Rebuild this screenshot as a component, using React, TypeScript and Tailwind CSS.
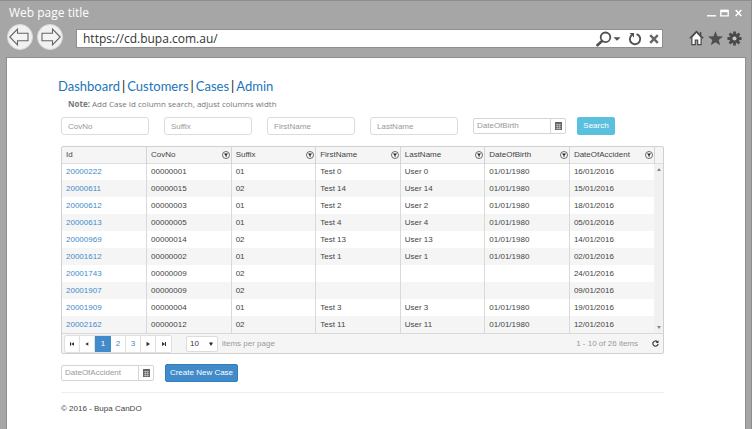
import React from "react";

const sans = "font-['Liberation_Sans',Arial,sans-serif]";
const humanist = "font-['Open_Sans','Noto_Sans',sans-serif]";

const columns = ["CovNo", "Suffix", "FirstName", "LastName", "DateOfBirth", "DateOfAccident"];

const rows: string[][] = [
  ["20000222", "00000001", "01", "Test 0", "User 0", "01/01/1980", "16/01/2016"],
  ["20000611", "00000015", "02", "Test 14", "User 14", "01/01/1980", "15/01/2016"],
  ["20000612", "00000003", "01", "Test 2", "User 2", "01/01/1980", "18/01/2016"],
  ["20000613", "00000005", "01", "Test 4", "User 4", "01/01/1980", "05/01/2016"],
  ["20000969", "00000014", "02", "Test 13", "User 13", "01/01/1980", "14/01/2016"],
  ["20001612", "00000002", "01", "Test 1", "User 1", "01/01/1980", "02/01/2016"],
  ["20001743", "00000009", "02", "", "", "", "24/01/2016"],
  ["20001907", "00000009", "02", "", "", "", "09/01/2016"],
  ["20001909", "00000004", "01", "Test 3", "User 3", "01/01/1980", "19/01/2016"],
  ["20002162", "00000012", "02", "Test 11", "User 11", "01/01/1980", "12/01/2016"],
];

function NavArrow({ back = false }: { back?: boolean }) {
  return (
    <button type="button" aria-label={back ? "Back" : "Forward"} className="size-[26px] shrink-0">
      <svg viewBox="0 0 26 26" className={back ? "size-full" : "size-full -scale-x-100"}>
        <circle cx="13" cy="13" r="12.5" fill="#f1f1f1" stroke="#d9d9d9" />
        <path d="M2.8 13 10.5 5.2V9.2H21V16.8H10.5V20.8Z" fill="#f4f4f4" stroke="#666" strokeWidth="1.1" />
      </svg>
    </button>
  );
}

function FilterIcon() {
  return (
    <svg viewBox="0 0 8 8" className="size-2 shrink-0">
      <circle cx="4" cy="4" r="3.5" fill="#fff" stroke="#444" strokeWidth="0.8" />
      <path d="M1.9 2.4H6.1L4.5 4.5V6.2L3.5 5.6V4.5Z" fill="#222" />
    </svg>
  );
}

function CalendarIcon() {
  return (
    <svg viewBox="0 0 7 8" className="h-2 w-[7px]">
      <path d="M0 0H7V8H0Z" fill="#666" />
      <path d="M1 2.5H6M1 4.5H6M1 6.5H6M2.4 2V7.5M4.6 2V7.5" stroke="#ddd" strokeWidth="0.5" />
    </svg>
  );
}

function TextField({ name }: { name: string }) {
  return (
    <input
      aria-label={name}
      placeholder={name}
      className="h-[18px] w-[88px] rounded-[3px] border border-[#dcdcdc] bg-white px-1.5 text-[8px] placeholder:text-[#999] outline-none"
    />
  );
}

function DateField({ name }: { name: string }) {
  return (
    <div className="flex h-4 w-[93px] overflow-hidden rounded-[2px] border border-[#d5d5d5] bg-white">
      <input aria-label={name} placeholder={name} className="w-0 grow px-[3px] text-[8px] placeholder:text-[#999] outline-none" />
      <button type="button" aria-label={`Pick ${name}`} className="flex w-[15px] items-center justify-center border-l border-[#d5d5d5]">
        <CalendarIcon />
      </button>
    </div>
  );
}

function PagerIcon({ path }: { path: string }) {
  return (
    <svg viewBox="0 0 6 6" className="size-1.5">
      <path d={path} fill="#333" />
    </svg>
  );
}

const pagerButton = "flex h-4 w-[15px] items-center justify-center border-r border-[#e0e0e0]";

function Browser() {
  return (
    <header className={humanist}>
      <div className="flex h-[23px] items-center justify-between pr-1 pl-[3px]">
        <h1 className="text-[12px] text-white">Web page title</h1>
        <div className="flex items-center gap-1">
          <button type="button" aria-label="Minimise">
            <svg viewBox="0 0 9 8" className="h-2 w-[9px]"><path d="M0 6.8H9" stroke="#fff" strokeWidth="1.4" /></svg>
          </button>
          <button type="button" aria-label="Maximise">
            <svg viewBox="0 0 9 8" className="h-2 w-[9px]"><path d="M.8 1.5H8.2V6.8H.8Z" fill="none" stroke="#fff" strokeWidth="1.3" /><path d="M.8 2H8.2" stroke="#fff" strokeWidth="2.4" /></svg>
          </button>
          <button type="button" aria-label="Close" className="ml-0.5">
            <svg viewBox="0 0 7 8" className="h-2 w-[7px]"><path d="M.7 1 6.3 7M6.3 1 .7 7" stroke="#fff" strokeWidth="1.6" /></svg>
          </button>
        </div>
      </div>
      <div className="flex h-[33px] items-start pr-1 pl-px">
        <div className="flex gap-1">
          <NavArrow back />
          <NavArrow />
        </div>
        <div className="mt-[5px] ml-[13px] flex h-[19px] grow items-center border border-[#8f8f8f] bg-white pr-[3px] pl-1.5">
          <input aria-label="Address" defaultValue="https://cd.bupa.com.au/" className="w-0 grow text-[12px] text-[#333] outline-none" />
          <button type="button" aria-label="Find" className="mr-[7px]">
            <svg viewBox="0 0 26 16" className="h-4 w-[26px]">
              <circle cx="10.5" cy="6.3" r="4.8" fill="none" stroke="#505050" strokeWidth="1.8" />
              <path d="M7 10 2.4 14.2" stroke="#505050" strokeWidth="2.6" strokeLinecap="round" />
              <path d="M18.5 6.2H25.5L22 9.8Z" fill="#505050" />
            </svg>
          </button>
          <button type="button" aria-label="Reload" className="mr-[7px]">
            <svg viewBox="0 0 14 14" className="size-3.5">
              <path d="M8.6 2.1A5.2 5.2 0 1 1 3.8 3" fill="none" stroke="#505050" strokeWidth="1.9" />
              <path d="M1.6 1H6V5.4Z" fill="#505050" />
            </svg>
          </button>
          <button type="button" aria-label="Stop">
            <svg viewBox="0 0 10 10" className="size-2.5"><path d="M1.2 1.2 8.8 8.8M8.8 1.2 1.2 8.8" stroke="#666" strokeWidth="2.4" /></svg>
          </button>
        </div>
        <div className="mt-1.5 ml-[26px] flex items-center gap-1">
          <button type="button" aria-label="Home">
            <svg viewBox="0 0 15 16" className="h-4 w-[15px]">
              <path d="M2.9 7V14.6H6.3V10.2H8.7V14.6H12.1V7L7.5 2.2Z" fill="#fff" stroke="#4a4a4a" strokeWidth="1.2" />
              <path d="M.8 8.3 7.5 1.5 14.2 8.3M11.6 5.5V2" fill="none" stroke="#4a4a4a" strokeWidth="1.4" />
            </svg>
          </button>
          <button type="button" aria-label="Favourites">
            <svg viewBox="0 0 15 15" className="size-[15px]"><path d="M7.5.2 9.5 5.2 15 5.5 10.7 8.9 12.2 14.2 7.5 11.2 2.8 14.2 4.3 8.9 0 5.5 5.5 5.2Z" fill="#4f4f4f" /></svg>
          </button>
          <button type="button" aria-label="Settings">
            <svg viewBox="0 0 16 16" className="size-[15px]">
              <path d="M8 .5V15.5M.5 8H15.5M2.7 2.7 13.3 13.3M13.3 2.7 2.7 13.3" stroke="#4a4a4a" strokeWidth="3" />
              <circle cx="8" cy="8" r="3.8" fill="#c6c6c6" stroke="#4a4a4a" strokeWidth="3.2" />
            </svg>
          </button>
        </div>
      </div>
    </header>
  );
}

function CaseGrid() {
  return (
    <section className="mt-[11px] overflow-hidden rounded-[2px] border border-[#d0d0d0] bg-[#f5f5f5]">
      <table className="w-full table-fixed border-collapse text-left text-[8px] leading-3 text-[#444]">
        <colgroup>
          <col />
          {columns.map((c) => <col key={c} />)}
          <col className="w-[9px]" />
        </colgroup>
        <thead>
          <tr className="h-4 border-b border-[#dedede]">
            <th className="px-1 font-normal">Id</th>
            {columns.map((c) => (
              <th key={c} className="border-l border-[#d4d4d4] pr-px pl-1 font-normal">
                <div className="flex items-center justify-between">
                  {c}
                  <button type="button" aria-label={`Filter ${c}`}><FilterIcon /></button>
                </div>
              </th>
            ))}
            <th className="border-l border-[#d4d4d4]" />
          </tr>
        </thead>
        <tbody>
          {rows.map((row, i) => (
            <tr key={row[0]} className="h-[17px] bg-white even:bg-[#f5f5f5]">
              <td className="px-1"><a href="#case" className="text-[#428bca]">{row[0]}</a></td>
              {row.slice(1).map((v, j) => (
                <td key={j} className="border-l border-[#d9d9d9] px-1">{v}</td>
              ))}
              {i === 0 && (
                <td rowSpan={10} className="h-px bg-[#f1f1f1]">
                  <div className="flex h-full flex-col items-center justify-between py-1">
                    <svg viewBox="0 0 4 3" className="h-[3px] w-1"><path d="M0 3 2 0 4 3Z" fill="#888" /></svg>
                    <svg viewBox="0 0 4 3" className="h-[3px] w-1"><path d="M0 0H4L2 3Z" fill="#888" /></svg>
                  </div>
                </td>
              )}
            </tr>
          ))}
        </tbody>
      </table>
      <footer className="flex h-5 items-center border-t border-[#d9d9d9] pr-1 pl-0.5 text-[8px] text-[#999]">
        <nav aria-label="Pages" className="flex overflow-hidden rounded-[2px] border border-[#e0e0e0] bg-white text-[#428bca]">
          <button type="button" aria-label="First page" className={pagerButton}><PagerIcon path="M1 1.2H2V4.8H1ZM2 3 5 1.2V4.8Z" /></button>
          <button type="button" aria-label="Previous page" className={pagerButton}><PagerIcon path="M1.3 3 4.3 1.2V4.8Z" /></button>
          <button type="button" aria-current="page" className="h-4 w-4 bg-[#428bca] text-white">1</button>
          <button type="button" className={pagerButton}>2</button>
          <button type="button" className={pagerButton}>3</button>
          <button type="button" aria-label="Next page" className={pagerButton}><PagerIcon path="M1.5 .8V5.2L5 3Z" /></button>
          <button type="button" aria-label="Last page" className="flex h-4 w-[15px] items-center justify-center"><PagerIcon path="M1 1V5L4 3ZM4 1H5V5H4Z" /></button>
        </nav>
        <label className="ml-3.5 flex items-center gap-1">
          <span className="grid h-4 w-8 items-center rounded-[2px] border border-[#dcdcdc] bg-white">
            <select defaultValue="10" className="col-start-1 row-start-1 h-3.5 w-full appearance-none bg-transparent pl-[3px] text-[8px] text-[#333] outline-none">
              <option>10</option>
              <option>20</option>
            </select>
            <svg viewBox="0 0 4 4" className="pointer-events-none col-start-1 row-start-1 mr-1 size-1 justify-self-end"><path d="M0 .5H4L2 4Z" fill="#222" /></svg>
          </span>
          items per page
        </label>
        <span className="ml-auto">1 - 10 of 26 items</span>
        <button type="button" aria-label="Refresh" className="ml-3.5">
          <svg viewBox="0 0 8 8" className="size-[7px]">
            <path d="M6.2 2A3 3 0 1 0 7 4.5" fill="none" stroke="#333" strokeWidth="1.3" />
            <path d="M4.3 3.4H7.4V.3Z" fill="#333" />
          </svg>
        </button>
      </footer>
    </section>
  );
}

export default function App() {
  const links = ["Dashboard", "Customers", "Cases", "Admin"];
  return (
    <div className={`flex min-h-screen flex-col border-t border-r border-[#8d8d8d] bg-[#a6a6a6] pr-[5px] pl-1.5 ${sans}`}>
      <Browser />
      <main className="grow border-x border-t border-[#8f8f8f] bg-white pr-[81px] pb-4 pl-[54px]">
        <nav className="-ml-[3px] mt-[18px] flex gap-0.5 font-[Lato,'Open_Sans',sans-serif] text-[13px] leading-5 text-[#222]">
          {links.map((l, i) => (
            <React.Fragment key={l}>
              {i > 0 && <span>|</span>}
              <a href={`#${l.toLowerCase()}`} className="text-[#1b75bc]">{l}</a>
            </React.Fragment>
          ))}
        </nav>
        <p className={`pl-[7px] text-[8px] leading-4 text-[#777] ${humanist}`}>
          <b>Note:</b> Add Case Id column search, adjust columns width
        </p>
        <form className="mt-[5px] flex items-center gap-[15px]">
          {["CovNo", "Suffix", "FirstName", "LastName"].map((n) => <TextField key={n} name={n} />)}
          <DateField name="DateOfBirth" />
          <button type="button" className="-ml-1 h-[18px] w-[38px] rounded-[2px] bg-[#5bc0de] text-[8px] text-white">Search</button>
        </form>
        <CaseGrid />
        <div className="mt-2.5 flex items-center gap-[11px]">
          <DateField name="DateOfAccident" />
          <button type="button" className="h-[18px] w-[73px] rounded-[2px] border border-[#357ebd] bg-[#428bca] text-[8px] text-white">Create New Case</button>
        </div>
        <hr className="mt-2.5 border-[#eee]" />
        <footer className="mt-2.5 text-[8px] leading-3 text-[#444]">© 2016 - Bupa CanDO</footer>
      </main>
    </div>
  );
}
